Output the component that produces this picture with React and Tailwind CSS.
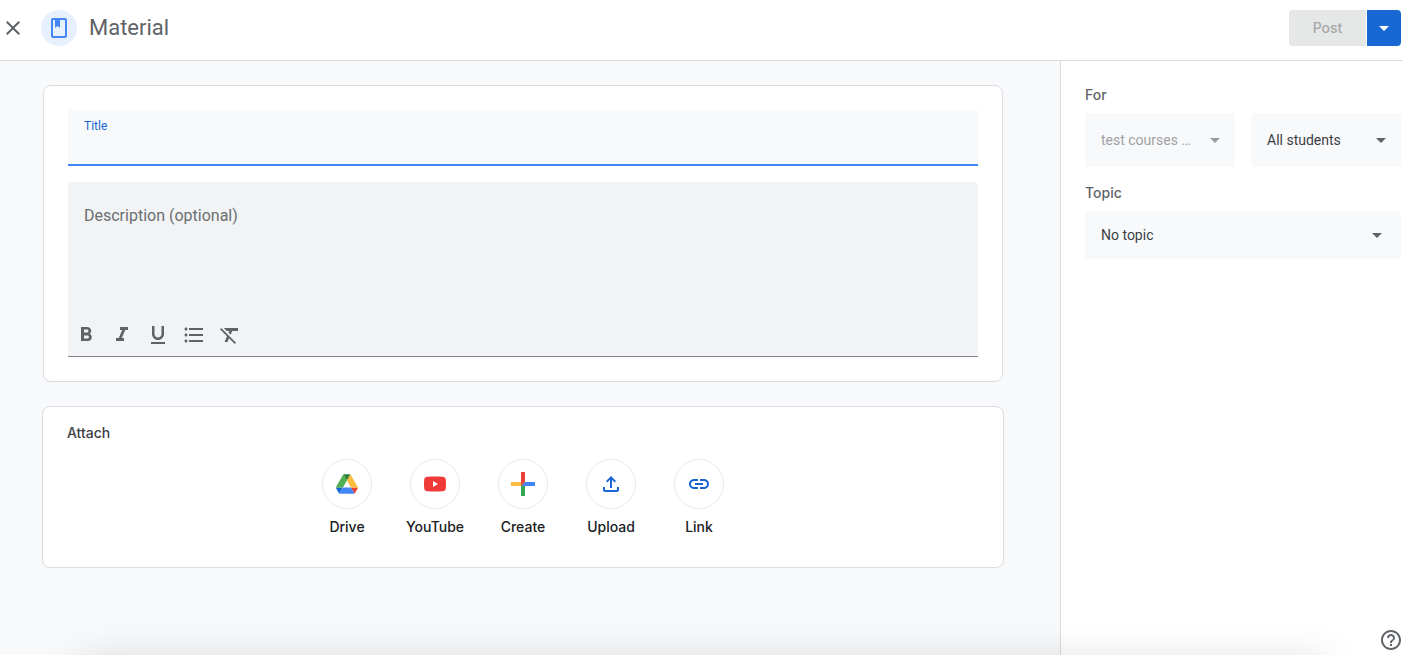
import { useState } from "react";
import {
  MdClose,
  MdArrowDropDown,
  MdFormatBold,
  MdFormatItalic,
  MdFormatUnderlined,
  MdFormatListBulleted,
  MdFormatClear,
  MdOutlineFileUpload,
  MdLink,
  MdHelpOutline,
} from "react-icons/md";

const formatActions = [
  { label: "Bold", icon: MdFormatBold },
  { label: "Italic", icon: MdFormatItalic },
  { label: "Underline", icon: MdFormatUnderlined },
  { label: "Bulleted list", icon: MdFormatListBulleted },
  { label: "Remove formatting", icon: MdFormatClear },
];

function MaterialIcon() {
  return (
    <svg viewBox="0 0 24 24" className="size-6" fill="#4285f4" aria-hidden="true">
      <path
        fillRule="evenodd"
        d="M18 2H6c-1.1 0-2 .9-2 2v16c0 1.1.9 2 2 2h12c1.1 0 2-.9 2-2V4c0-1.1-.9-2-2-2zm0 18H6V4h2v8l2.5-2 2.5 2V4h5v16z"
      />
    </svg>
  );
}

function DriveIcon() {
  return (
    <svg viewBox="0 0 88 78" className="h-5 w-[22px]" aria-hidden="true">
      <path fill="#1967d2" d="m6.6 66.85 3.85 6.65c.8 1.4 1.95 2.5 3.3 3.3L27.5 53H0c0 1.55.4 3.1 1.2 4.5z" />
      <path fill="#4caf50" d="M43.65 25 29.9 1.2c-1.35.8-2.5 1.9-3.3 3.3l-25.4 44A9.06 9.06 0 0 0 0 53h27.5z" />
      <path fill="#ea4335" d="M73.55 76.8c1.35-.8 2.5-1.9 3.3-3.3l1.6-2.75L86.1 57.5c.8-1.4 1.2-2.95 1.2-4.5H59.8l5.85 11.5z" />
      <path fill="#2e7d32" d="M43.65 25 57.4 1.2C56.05.4 54.5 0 52.9 0H34.4c-1.6 0-3.15.45-4.5 1.2z" />
      <path fill="#4285f4" d="M59.8 53H27.5L13.75 76.8c1.35.8 2.9 1.2 4.5 1.2h50.8c1.6 0 3.15-.45 4.5-1.2z" />
      <path fill="#fbbc40" d="m73.4 26.5-12.7-22c-.8-1.4-1.95-2.5-3.3-3.3L43.65 25 59.8 53h27.45c0-1.55-.4-3.1-1.2-4.5z" />
    </svg>
  );
}

function YouTubeIcon() {
  return (
    <svg viewBox="0 0 22 16" className="h-4 w-[22px]" aria-hidden="true">
      <path
        fill="#f03a37"
        d="M3.4.7C6 .4 16 .4 18.6.7c2 .2 3 1.2 3.2 3.1.25 2.7.25 5.7 0 8.4-.2 1.9-1.2 2.9-3.2 3.1-2.6.3-12.6.3-15.2 0-2-.2-3-1.2-3.2-3.1-.25-2.7-.25-5.7 0-8.4C.4 1.9 1.4.9 3.4.7z"
      />
      <path fill="#fff" d="M9 5v6l5-3z" />
    </svg>
  );
}

function CreateIcon() {
  return (
    <svg viewBox="0 0 24 24" className="size-6" aria-hidden="true">
      <path fill="#fbbc40" d="M0 10h12v4H0z" />
      <path fill="#34a853" d="M10 14h4v10h-4z" />
      <path fill="#4285f4" d="M14 10h10v4H10z" />
      <path fill="#ea4335" d="M10 0h4v10l-4 4z" />
    </svg>
  );
}

const attachOptions = [
  { label: "Drive", icon: <DriveIcon /> },
  { label: "YouTube", icon: <YouTubeIcon /> },
  { label: "Create", icon: <CreateIcon /> },
  { label: "Upload", icon: <MdOutlineFileUpload className="size-6" /> },
  { label: "Link", icon: <MdLink className="size-6" /> },
];

function SelectBox({ id, label, option, disabled, className, arrowClass }) {
  return (
    <div className="relative min-w-0 flex-1">
      <select
        id={id}
        aria-label={label}
        disabled={disabled}
        className={`w-full appearance-none bg-[#f8f9fb] pl-4 pr-9 text-sm text-[#3c4043] outline-none disabled:text-[#9fa1a4] disabled:opacity-100 ${className}`}
      >
        <option>{option}</option>
      </select>
      <MdArrowDropDown
        className={`pointer-events-none absolute inset-y-0 my-auto size-6 ${arrowClass} ${
          disabled ? "text-[#9a9c9f]" : "text-[#5f6368]"
        }`}
      />
    </div>
  );
}

function Header({ canPost }) {
  return (
    <header className="flex items-center border-b border-[#dadce0] bg-white pb-3.5 pl-px pr-0.5 pt-2.5">
      <button type="button" aria-label="Close" className="text-[#5f6368]">
        <MdClose className="size-6" />
      </button>
      <span className="ml-4 flex size-9 items-center justify-center rounded-full bg-[#e6f1fd]">
        <MaterialIcon />
      </span>
      <h1 className="ml-3 text-[22px] leading-7 text-[#5f6368]">Material</h1>
      <div className="ml-auto flex gap-px font-['Inter',sans-serif] text-sm font-medium">
        <button
          type="button"
          disabled={!canPost}
          className="h-9 w-[77px] rounded-l bg-[#1967d2] text-white disabled:bg-[#e6e8e7] disabled:text-[#a5a8a8]"
        >
          Post
        </button>
        <button
          type="button"
          aria-label="More post options"
          className="flex h-9 w-[34px] items-center justify-center rounded-r bg-[#1967d2] text-white"
        >
          <MdArrowDropDown className="size-6" />
        </button>
      </div>
    </header>
  );
}

export default function App() {
  const [title, setTitle] = useState("");
  const [description, setDescription] = useState("");

  return (
    <div className="flex min-h-screen flex-col bg-white font-['Roboto',sans-serif] text-[#3c4043]">
      <Header canPost={title.trim().length > 0} />

      <div className="flex flex-1">
        <main className="min-w-0 flex-1 bg-[#f8f9fb] py-6 pl-2 pr-[22px]">
          <section className="mx-auto max-w-[960px] rounded-lg border border-[#dadce0] bg-white p-6">
            <div className="bg-[#f8f9fb] border-b-2 border-[#4285f4] px-4 pt-2">
              <label htmlFor="title" className="block text-xs text-[#1967d2]">
                Title
              </label>
              <input
                id="title"
                type="text"
                value={title}
                onChange={(e) => setTitle(e.target.value)}
                className="block h-[30px] w-full bg-transparent text-base outline-none"
              />
            </div>

            <div className="mt-4 rounded-t border-b border-[#80868b] bg-[#f1f3f4] pb-[3px]">
              <textarea
                aria-label="Description"
                placeholder="Description (optional)"
                value={description}
                onChange={(e) => setDescription(e.target.value)}
                className="block h-[135px] w-full resize-none bg-transparent px-4 pt-[22px] text-base outline-none placeholder:text-[#6b6f73]"
              />
              <div className="flex text-[#5f6368]">
                {formatActions.map(({ label, icon: Icon }) => (
                  <button
                    key={label}
                    type="button"
                    aria-label={label}
                    className="flex size-9 items-center justify-center"
                  >
                    <Icon className="size-6" />
                  </button>
                ))}
              </div>
            </div>
          </section>

          <section className="mx-auto mt-6 max-w-[962px] rounded-lg border border-[#dadce0] bg-white px-6 pb-[30px] pt-4 font-['Inter',sans-serif]">
            <h2 className="text-sm font-medium">Attach</h2>
            <div className="mt-4 flex justify-center">
              {attachOptions.map(({ label, icon }) => (
                <button
                  key={label}
                  type="button"
                  className="flex w-[88px] flex-col items-center gap-2 text-sm font-medium text-[#202124]"
                >
                  <span className="flex size-[50px] items-center justify-center rounded-full border border-[#e8eaed] text-[#1967d2]">
                    {icon}
                  </span>
                  {label}
                </button>
              ))}
            </div>
          </section>
        </main>

        <aside className="w-[343px] shrink-0 border-l border-[#dadce0] bg-white pl-6 pr-0.5 pt-6">
          <h2 className="font-['Inter',sans-serif] text-sm font-medium text-[#5f6368]">For</h2>
          <div className="mt-2 flex gap-4">
            <SelectBox
              id="course"
              label="Course"
              option="test courses …"
              disabled
              className="h-[54px] rounded"
              arrowClass="right-2"
            />
            <SelectBox
              id="students"
              label="Students"
              option="All students"
              className="h-[54px] rounded"
              arrowClass="right-2"
            />
          </div>

          <label
            htmlFor="topic"
            className="mt-4 block font-['Inter',sans-serif] text-sm font-medium text-[#5f6368]"
          >
            Topic
          </label>
          <div className="mt-2 flex">
            <SelectBox id="topic" option="No topic" className="h-12 rounded-t" arrowClass="right-3" />
          </div>
        </aside>
      </div>

      {/* soft shade along the bottom edge */}
      <div className="pointer-events-none fixed inset-x-0 bottom-0 h-8 overflow-hidden">
        <div className="mx-20 mt-9 h-20 shadow-[0_0_40px_rgba(0,0,0,0.13)]" />
      </div>

      <button
        type="button"
        aria-label="Help"
        className="fixed bottom-[3px] right-0 text-[#5f6368]"
      >
        <MdHelpOutline className="size-6" />
      </button>
    </div>
  );
}
